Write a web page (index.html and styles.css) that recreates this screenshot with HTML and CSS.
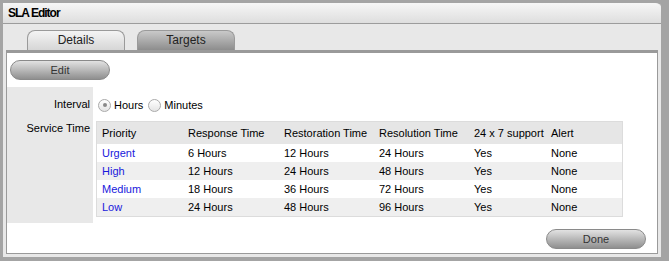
FILE: index.html
```html
<!DOCTYPE html>
<html lang="en">
<head>
  <meta charset="UTF-8">
  <meta name="viewport" content="width=device-width, initial-scale=1.0">
  <title>SLA Editor</title>
  <link rel="stylesheet" href="styles.css">
</head>
<body>
  <div class="dialog">
    <div class="title-bar">SLA Editor</div>
    <div class="tabs">
      <span class="tab active">Details</span>
      <span class="tab">Targets</span>
    </div>
    <div class="panel">
      <div class="toolbar">
        <button class="btn">Edit</button>
      </div>
      <div class="form">
        <div class="label label-interval">Interval</div>
        <div class="value value-interval">
          <label class="radio"><span class="radio-dot checked"></span>Hours</label>
          <label class="radio"><span class="radio-dot"></span>Minutes</label>
        </div>
        <div class="label label-service">Service Time</div>
        <div class="value">
          <table class="targets">
            <thead>
              <tr>
                <th class="c1">Priority</th>
                <th class="c2">Response Time</th>
                <th class="c3">Restoration Time</th>
                <th class="c4">Resolution Time</th>
                <th class="c5">24 x 7 support</th>
                <th class="c6">Alert</th>
              </tr>
            </thead>
            <tbody id="target-rows">
              <!-- rows filled in below -->
            </tbody>
          </table>
        </div>
      </div>
      <div class="footer">
        <button class="btn">Done</button>
      </div>
    </div>
  </div>

  <script>
    const targets = [
      { priority: 'Urgent', response: 6, restoration: 12, resolution: 24 },
      { priority: 'High', response: 12, restoration: 24, resolution: 48 },
      { priority: 'Medium', response: 18, restoration: 36, resolution: 72 },
      { priority: 'Low', response: 24, restoration: 48, resolution: 96 }
    ];

    const rows = document.getElementById('target-rows');

    // Build one row per priority
    targets.forEach(t => {
      const row = document.createElement('tr');
      row.innerHTML = `
        <td><a href="#">${t.priority}</a></td>
        <td>${t.response} Hours</td>
        <td>${t.restoration} Hours</td>
        <td>${t.resolution} Hours</td>
        <td>Yes</td>
        <td>None</td>
      `;
      rows.appendChild(row);
    });
  </script>
</body>
</html>
```
FILE: styles.css
```css
body {
  margin: 0;
  background: #a4a4a4;
  font-family: "Liberation Sans", Arial, sans-serif;
  font-size: 11px;
  color: #000;
}
.dialog {
  width: 658px;
  height: 254px;
  border-top: 3px solid #a4a4a4;
  border-left: 3px solid #a4a4a4;
  border-bottom: 4px solid #a4a4a4;
  border-top-right-radius: 6px;
  background: #e8e8e8;
  overflow: hidden;
}
.title-bar {
  height: 20px;
  line-height: 20px;
  padding-left: 5px;
  font-size: 12px;
  font-weight: bold;
  letter-spacing: -1px;
  background: linear-gradient(#f6f6f6, #dedede);
  border-bottom: 1px solid #9c9c9c;
  border-top-right-radius: 6px;
}
.tabs {
  display: flex;
  gap: 12px;
  height: 20px;
  padding: 6px 0 0 24px;
}
.tab {
  box-sizing: border-box;
  width: 98px;
  height: 20px;
  line-height: 19px;
  text-align: center;
  font-size: 12px;
  color: #222;
  border: 1px solid #9a9a9a;
  border-bottom: none;
  border-radius: 8px 8px 0 0;
  background: linear-gradient(#c9c9c9, #8d8d8d);
}
.tab.active {
  background: linear-gradient(#f4f4f4, #d6d6d6);
}
.panel {
  margin: 0 3px;
  background: #fff;
  border: 1px solid #9a9a9a;
  border-top: 3px solid #9a9a9a;
}
.btn {
  box-sizing: border-box;
  width: 100px;
  height: 20px;
  padding: 0;
  font-family: "Liberation Sans", Arial, sans-serif;
  font-size: 11px;
  color: #333;
  border: 1px solid #8a8a8a;
  border-radius: 10px;
  background: linear-gradient(#e2e2e2, #8f8f8f);
}
.toolbar {
  height: 34px;
  box-sizing: border-box;
  padding: 7px 0 0 3px;
}
.form {
  display: grid;
  grid-template-columns: 86px 1fr;
  grid-template-rows: 28px 108px;
}
.label {
  background: #e8e8e8;
  text-align: right;
  padding-right: 3px;
  line-height: 14px;
}
.label-interval {
  padding-top: 10px;
}
.label-service {
  padding-top: 6px;
}
.value-interval {
  display: flex;
  align-items: center;
  padding: 8px 0 0 5px;
}
.radio {
  display: flex;
  align-items: center;
  margin-right: 5px;
}
.radio-dot {
  box-sizing: border-box;
  width: 13px;
  height: 13px;
  margin-right: 3px;
  border: 1px solid #aaa;
  border-radius: 50%;
  background: linear-gradient(#fff, #e4e4e4);
  display: flex;
  align-items: center;
  justify-content: center;
}
.radio-dot.checked::after {
  content: "";
  width: 4px;
  height: 4px;
  border-radius: 50%;
  background: #888;
}
.targets {
  margin: 6px 0 0 3px;
  width: 527px;
  border-collapse: collapse;
  border: 1px solid #dcdcdc;
  font-size: 11px;
}
.targets th,
.targets td {
  padding: 0 0 0 5px;
  text-align: left;
  font-weight: normal;
  white-space: nowrap;
}
.targets th {
  height: 22px;
  background: #e6e6e6;
}
.targets td {
  height: 18px;
}
.targets tbody tr:nth-child(even) td {
  background: #efefef;
}
.targets a {
  color: #1818dc;
  text-decoration: none;
}
.c1 { width: 81px; }
.c2 { width: 91px; }
.c3 { width: 90px; }
.c4 { width: 90px; }
.c5 { width: 72px; }
.footer {
  height: 30px;
  box-sizing: border-box;
  padding: 6px 11px 0 0;
  text-align: right;
}
```
